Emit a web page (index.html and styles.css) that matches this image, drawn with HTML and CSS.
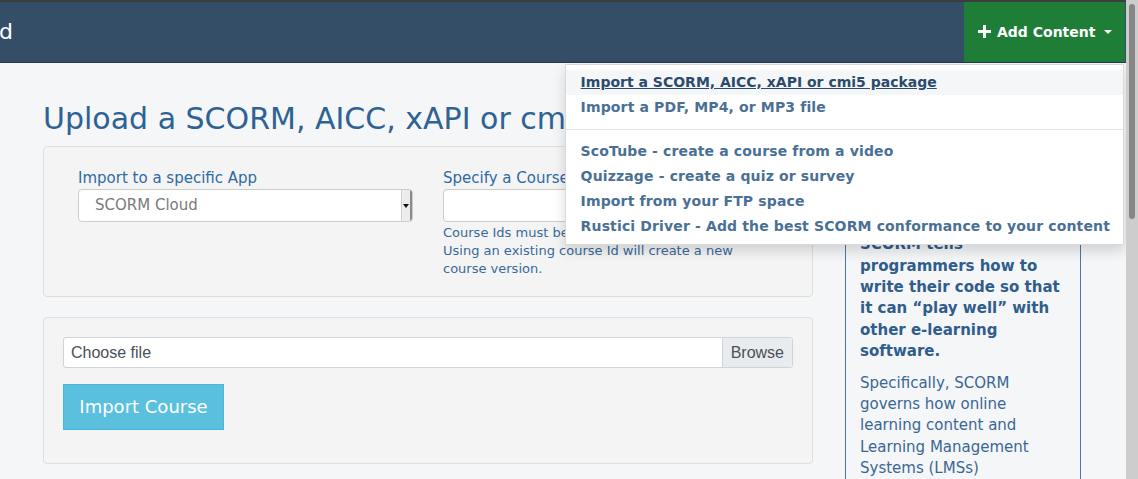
FILE: index.html
```html
<!DOCTYPE html>
<html lang="en">
<head>
<meta charset="utf-8">
<title>Upload a SCORM, AICC, xAPI or cmi5 package</title>
<link rel="stylesheet" href="styles.css">
</head>
<body>
<div class="app">
  <header class="navbar">
    <span class="brand">d</span>
    <div class="nav-actions">
      <div class="add-wrap">
        <button class="add-btn" type="button">
          <svg class="plus" width="13" height="13" viewBox="0 0 13 13" aria-hidden="true"><path d="M5 0h3v5h5v3H8v5H5V8H0V5h5z" fill="#fff"/></svg>
          <span>Add Content</span>
          <span class="caret"></span>
        </button>
        <ul class="menu">
          <li class="item active">Import a SCORM, AICC, xAPI or cmi5 package</li>
          <li class="item">Import a PDF, MP4, or MP3 file</li>
          <li class="divider"></li>
          <li class="item">ScoTube - create a course from a video</li>
          <li class="item">Quizzage - create a quiz or survey</li>
          <li class="item">Import from your FTP space</li>
          <li class="item">Rustici Driver - Add the best SCORM conformance to your content</li>
        </ul>
      </div>
    </div>
  </header>
  <div class="page">
    <main class="main">
      <h1 class="title">Upload a SCORM, AICC, xAPI or cmi5 package</h1>
      <section class="panel panel-settings">
        <div class="col">
          <label class="label">Import to a specific App</label>
          <div class="select">
            <span class="select-text">SCORM Cloud</span>
            <span class="select-btn"><span class="select-arrow"></span></span>
          </div>
        </div>
        <div class="col">
          <label class="label">Specify a Course Id</label>
          <div class="text-input"></div>
          <p class="help">Course Ids must be unique within an App.<br>Using an existing course Id will create a new course version.</p>
        </div>
      </section>
      <section class="panel panel-upload">
        <div class="file">
          <span class="file-label">Choose file</span>
          <span class="file-browse">Browse</span>
        </div>
        <button class="import-btn" type="button">Import Course</button>
      </section>
    </main>
    <aside class="side">
      <div class="side-box">
        <h4 class="side-title">What is SCORM?</h4>
        <p class="side-p">SCORM is a set of technical standards for e-learning software products.</p>
        <p class="side-p strong">SCORM tells programmers how to write their code so that it can “play well” with other e-learning software.</p>
        <p class="side-p">Specifically, SCORM governs how online learning content and Learning Management Systems (LMSs) communicate with each other.</p>
      </div>
    </aside>
  </div>
</div>
<div class="scrollbar"><div class="thumb"></div></div>
</body>
</html>
```
FILE: styles.css
```css
* { box-sizing: border-box; }
html, body { margin: 0; padding: 0; height: 100%; }
body {
  display: flex;
  overflow: hidden;
  background: #f5f6f8;
  font-family: "DejaVu Sans", Verdana, sans-serif;
}
.app {
  flex: 1;
  height: 100vh;
  overflow: hidden;
}
.scrollbar {
  width: 12px;
  background: #cdcdcd;
  padding: 4px 3px 0 3px;
}
.thumb {
  width: 6px;
  height: 215px;
  background: #868686;
  border-radius: 3px;
}

/* navbar */
.navbar {
  display: flex;
  justify-content: space-between;
  align-items: stretch;
  height: 63px;
  background: #344e67;
  border-top: 2px solid #3b3d40;
  border-bottom: 1px solid #263a4e;
  padding-right: 1px;
}
.brand {
  color: #fff;
  font-size: 22px;
  line-height: 60px;
  margin-left: -1px;
}
.nav-actions { display: flex; }
.add-wrap { position: relative; display: flex; }
.add-btn {
  display: flex;
  align-items: center;
  gap: 6px;
  width: 161px;
  padding: 0 0 0 14px;
  border: 0;
  background: #1e7d36;
  color: #fff;
  font-family: "DejaVu Sans", Verdana, sans-serif;
  font-weight: bold;
  font-size: 14px;
}
.plus { margin-top: -1px; }
.caret {
  margin-left: 3px;
  width: 0;
  height: 0;
  border-left: 4px solid transparent;
  border-right: 4px solid transparent;
  border-top: 4px solid #fff;
}
.menu {
  position: absolute;
  top: calc(100% + 2px);
  right: 1px;
  min-width: 559px;
  margin: 0;
  padding: 5px 0;
  list-style: none;
  background: #fff;
  border: 1px solid #d9d9d9;
  box-shadow: 0 6px 12px rgba(0, 0, 0, .15);
  z-index: 10;
  white-space: nowrap;
}
.item {
  padding: 0 13px 0 15px;
  line-height: 25px;
  font-size: 14px;
  font-weight: bold;
  color: #4a7095;
  letter-spacing: 0.01em;
}
.item.active {
  background: #f5f6f8;
  color: #2a4b6d;
  text-decoration: underline;
  letter-spacing: 0;
}
.divider {
  height: 1px;
  margin: 9px 0 9px;
  background: #e3e3e3;
}

/* page */
.page {
  display: flex;
  gap: 32px;
  padding-left: 43px;
}
.main { width: 770px; }
.title {
  margin: 38px 0 9px;
  font-size: 30px;
  line-height: 36px;
  font-weight: normal;
  color: #2e6295;
}
.panel {
  background: #f4f4f4;
  border: 1px solid #dedede;
  border-radius: 4px;
}
.panel-settings {
  display: flex;
  padding: 21px 19px 18px;
}
.col {
  width: 50%;
  padding: 0 15px;
}
.label {
  display: block;
  font-size: 15px;
  line-height: 21px;
  color: #2f6aa3;
}
.select {
  display: flex;
  height: 33px;
  background: #fff;
  border: 1px solid #cccccc;
  border-radius: 4px;
  overflow: hidden;
}
.select-text {
  flex: 1;
  padding-left: 16px;
  font-size: 15px;
  line-height: 31px;
  color: #7a7a7a;
}
.select-btn {
  width: 11px;
  display: flex;
  align-items: center;
  justify-content: center;
  background: #ececec;
  border-left: 1px solid #cfcfcf;
  border-right: 2px solid #8a8a8a;
}
.select-arrow {
  width: 0;
  height: 0;
  border-left: 3px solid transparent;
  border-right: 3px solid transparent;
  border-top: 4px solid #111;
}
.text-input {
  height: 33px;
  background: #fff;
  border: 1px solid #cccccc;
  border-radius: 4px;
}
.help {
  margin: 2px 0 0;
  font-size: 13px;
  line-height: 18px;
  color: #39699a;
}

.panel-upload {
  margin-top: 20px;
  padding: 19px 19px 33px;
}
.file {
  display: flex;
  height: 31px;
  background: #fff;
  border: 1px solid #ced4da;
  border-radius: 3px;
  font-family: "Liberation Sans", Arial, sans-serif;
  font-size: 16px;
  color: #495057;
  overflow: hidden;
}
.file-label {
  flex: 1;
  padding-left: 7px;
  line-height: 29px;
}
.file-browse {
  padding: 0 8px;
  line-height: 29px;
  background: #e9ecef;
  border-left: 1px solid #ced4da;
}
.import-btn {
  display: block;
  margin-top: 16px;
  width: 161px;
  height: 46px;
  background: #5bc0de;
  border: 1px solid #46b8da;
  color: #fff;
  font-family: "DejaVu Sans", Verdana, sans-serif;
  font-size: 18px;
  padding: 0 0 2px;
}

/* sidebar */
.side { width: 236px; }
.side-box {
  margin-top: 48px;
  border: 1px solid #4a78a6;
  padding: 14px 14px 14px;
}
.side-title {
  margin: 0 0 10px;
  font-size: 18px;
  line-height: 24px;
  color: #2f5d8c;
}
.side-p {
  margin: 0 0 10.5px;
  font-size: 15px;
  line-height: 21.3px;
  color: #3a6794;
}
.side-p.strong {
  font-weight: bold;
  color: #2f5d8c;
}
```
